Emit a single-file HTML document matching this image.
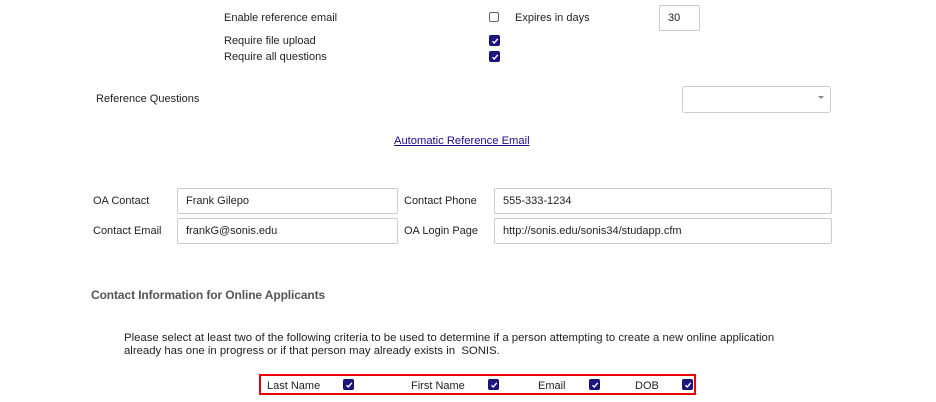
<!DOCTYPE html>
<html><head><style>
body{margin:0;width:936px;height:402px;background:#fff;font-family:"Liberation Sans",Arial,sans-serif;font-size:11px;color:#222;position:relative;overflow:hidden}
.a{position:absolute;white-space:nowrap}
.cb{position:absolute;width:9px;height:9px;border-radius:2px;background:#1d1580;border:1px solid #14106a}
.cb svg{position:absolute;left:1px;top:1px}
.cbo{position:absolute;width:8px;height:8px;border:1px solid #666;border-radius:2px;background:#fff}
.in{position:absolute;border:1px solid #ccc;border-radius:2px;background:#fff;box-sizing:border-box;padding-left:8px;line-height:24px;color:#222}
</style></head><body>
<div class="a" style="left:224px;top:12px">Enable reference email</div>
<div class="cbo" style="left:489px;top:12px"></div>
<div class="a" style="left:515px;top:12px">Expires in days</div>
<div class="in" style="left:659px;top:5px;width:41px;height:26px;line-height:25px">30</div>
<div class="a" style="left:224px;top:35px">Require file upload</div>
<div class="cb" style="left:489px;top:35px"><svg width="8" height="8" viewBox="0 0 8 8"><path d="M1.5 4.2L3.3 6L6.8 1.8" stroke="#fff" stroke-width="1.4" fill="none"/></svg></div>
<div class="a" style="left:224px;top:51px">Require all questions</div>
<div class="cb" style="left:489px;top:51px"><svg width="8" height="8" viewBox="0 0 8 8"><path d="M1.5 4.2L3.3 6L6.8 1.8" stroke="#fff" stroke-width="1.4" fill="none"/></svg></div>
<div class="a" style="left:96px;top:93px">Reference Questions</div>
<div class="in" style="left:682px;top:86px;width:149px;height:27px;border-radius:3px"></div>
<div class="a" style="left:818px;top:96px;width:0;height:0;border-left:3px solid transparent;border-right:3px solid transparent;border-top:3px solid #888"></div>
<div class="a" style="left:394px;top:135px;font-size:11.2px;text-decoration:underline;color:#1a0a8c">Automatic Reference Email</div>
<div class="a" style="left:93px;top:195px">OA Contact</div>
<div class="in" style="left:177px;top:188px;width:221px;height:26px">Frank Gilepo</div>
<div class="a" style="left:404px;top:195px">Contact Phone</div>
<div class="in" style="left:494px;top:188px;width:338px;height:26px">555-333-1234</div>
<div class="a" style="left:93px;top:225px">Contact Email</div>
<div class="in" style="left:177px;top:218px;width:221px;height:26px">frankG@sonis.edu</div>
<div class="a" style="left:404px;top:225px">OA Login Page</div>
<div class="in" style="left:494px;top:218px;width:338px;height:26px">http://sonis.edu/sonis34/studapp.cfm</div>
<div class="a" style="left:91px;top:288px;font-weight:bold;color:#555;font-size:12px;letter-spacing:-0.1px">Contact Information for Online Applicants</div>
<div class="a" style="left:124px;top:332px;line-height:13px;font-size:11.35px">Please select at least two of the following criteria to be used to determine if a person attempting to create a new online application<br>already has one in progress or if that person may already exists in&nbsp; SONIS.</div>
<div class="a" style="left:259px;top:374px;width:433px;height:17px;border:2.5px solid #e00"></div>
<div class="a" style="left:267px;top:380px">Last Name</div>
<div class="cb" style="left:343px;top:379px"><svg width="8" height="8" viewBox="0 0 8 8"><path d="M1.5 4.2L3.3 6L6.8 1.8" stroke="#fff" stroke-width="1.4" fill="none"/></svg></div>
<div class="a" style="left:411px;top:380px">First Name</div>
<div class="cb" style="left:488px;top:379px"><svg width="8" height="8" viewBox="0 0 8 8"><path d="M1.5 4.2L3.3 6L6.8 1.8" stroke="#fff" stroke-width="1.4" fill="none"/></svg></div>
<div class="a" style="left:538px;top:380px">Email</div>
<div class="cb" style="left:589px;top:379px"><svg width="8" height="8" viewBox="0 0 8 8"><path d="M1.5 4.2L3.3 6L6.8 1.8" stroke="#fff" stroke-width="1.4" fill="none"/></svg></div>
<div class="a" style="left:635px;top:380px">DOB</div>
<div class="cb" style="left:682px;top:379px"><svg width="8" height="8" viewBox="0 0 8 8"><path d="M1.5 4.2L3.3 6L6.8 1.8" stroke="#fff" stroke-width="1.4" fill="none"/></svg></div>
</body></html>
